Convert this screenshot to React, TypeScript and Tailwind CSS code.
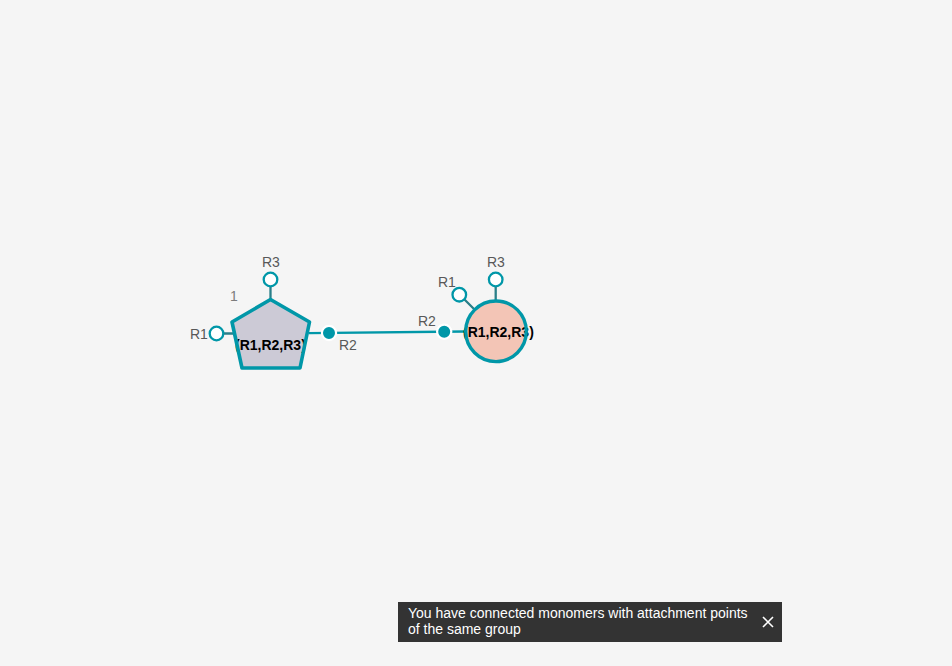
import { useState } from 'react';

type Point = { x: number; y: number };

const TEAL = '#0097a8';

function FreePoint({ x, y, label, lx, ly }: Point & { label: string; lx: number; ly: number }) {
  return (
    <g>
      <circle cx={x} cy={y} r="6.8" fill="#ffffff" stroke={TEAL} strokeWidth="2.3" />
      <text x={lx} y={ly} fill="#585858" fontSize="14">
        {label}
      </text>
    </g>
  );
}

function BoundPoint({ x, y, label, lx, ly }: Point & { label: string; lx: number; ly: number }) {
  return (
    <g>
      <circle cx={x} cy={y} r="7.1" fill={TEAL} stroke="#ffffff" strokeWidth="2.2" />
      <text x={lx} y={ly} fill="#585858" fontSize="14">
        {label}
      </text>
    </g>
  );
}

function Sugar() {
  const outline = 'M270.5 299.5 L309.5 322 L300 368 L242 368 L232 322 Z';
  return (
    <g>
      <path d="M270.5 286v14M223 333.5h12" stroke="#2a7f89" strokeWidth="2.3" />
      <path d={outline} fill="#cccad6" />
      <text x="235" y="350" fontSize="14" fontWeight="700" fill="#000000">
        (R1,R2,R3)
      </text>
      <path d={outline} fill="none" stroke={TEAL} strokeWidth="3.6" strokeLinejoin="round" />
      <text x="230" y="301" fontSize="14" fill="#7c7c7c">
        1
      </text>
      <FreePoint x={270.5} y={279.5} label="R3" lx={262} ly={267} />
      <FreePoint x={216.5} y={333.5} label="R1" lx={190} ly={339} />
      <BoundPoint x={329} y={333} label="R2" lx={339} ly={350} />
    </g>
  );
}

function Phosphate() {
  return (
    <g>
      <path d="M495.7 286v14M464 299l11 11" stroke="#2a7f89" strokeWidth="2.3" />
      <circle cx="496" cy="331.3" r="30.3" fill="#f3c5b6" />
      <text x="463" y="337" fontSize="14" fontWeight="700" fill="#000000">
        (R1,R2,R3)
      </text>
      <circle cx="496" cy="331.3" r="30.3" fill="none" stroke={TEAL} strokeWidth="3.4" />
      <FreePoint x={495.7} y={279.5} label="R3" lx={487} ly={267} />
      <FreePoint x={459.3} y={294.7} label="R1" lx={438} ly={287} />
      <BoundPoint x={444.2} y={331.8} label="R2" lx={418} ly={326} />
    </g>
  );
}

export default function App() {
  const [open, setOpen] = useState(true);

  return (
    <main className="relative h-screen w-full overflow-hidden bg-[#f5f5f5] font-['Liberation_Sans',Arial,sans-serif]">
      <svg className="block h-full w-full" role="img" aria-label="Connected monomers">
        <path d="M309 333.2L464 331.5" stroke={TEAL} strokeWidth="2.3" />
        <Sugar />
        <Phosphate />
      </svg>
      {open && (
        <div
          role="status"
          className="absolute right-[170px] bottom-6 flex w-96 items-center justify-between bg-[#333333] pt-[3px] pr-2 pb-[5px] pl-2.5 text-sm leading-4 text-white"
        >
          <p className="w-[342px]">You have connected monomers with attachment points of the same group</p>
          <button
            type="button"
            aria-label="Close"
            onClick={() => setOpen(false)}
            className="mt-0.5 flex h-3 w-3 items-center justify-center"
          >
            <svg viewBox="0 0 12 12" className="h-3 w-3" fill="none" stroke="#ffffff" strokeWidth="1.6">
              <path d="M1 1l10 10M11 1L1 11" />
            </svg>
          </button>
        </div>
      )}
    </main>
  );
}
